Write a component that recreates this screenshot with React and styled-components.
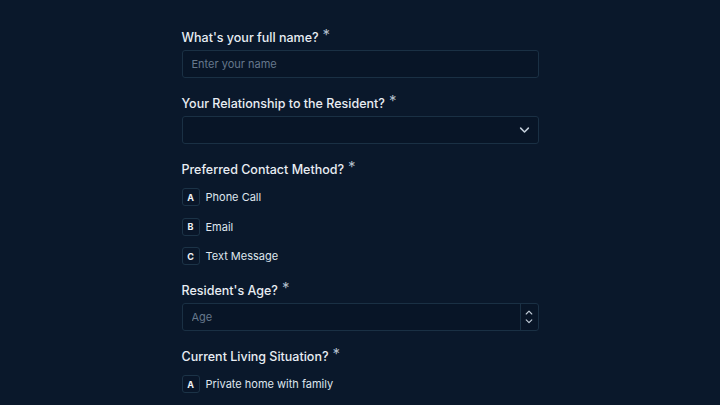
import React from 'react';
import styled, { createGlobalStyle } from 'styled-components';

const GlobalStyle = createGlobalStyle`
  html, body {
    margin: 0;
    padding: 0;
    background: #0a182b;
  }
  body {
    font-family: Inter, 'Noto Sans', sans-serif;
    color: #e6ecf2;
  }
`;

const Page = styled.main`
  width: 720px;
  height: 405px;
  overflow: hidden;
  background: #0a182b;
  display: flex;
  justify-content: center;
`;

const Form = styled.form`
  width: 357px;
  padding-top: 29px;
  display: flex;
  flex-direction: column;
  gap: 17px;
`;

const Field = styled.div`
  display: flex;
  flex-direction: column;
  gap: ${(p) => (p.$group ? '9px' : '3px')};
`;

const Label = styled.label`
  display: block;
  height: 18px;
  font-size: 12.5px;
  font-weight: 500;
  line-height: 18px;
  color: #e8edf3;
`;

const Star = styled.span`
  display: inline-block;
  margin-left: 4px;
  font-size: 15px;
  line-height: 1;
  font-weight: 400;
  color: #b0bdca;
  vertical-align: top;
  transform: translateY(-2px);
`;

const Box = styled.div`
  position: relative;
  height: 28px;
  border: 1px solid #1a3044;
  border-radius: 3px;
  background: #081527;
  box-sizing: border-box;
  display: flex;
  align-items: center;
`;

const Input = styled.input`
  flex: 1;
  height: 100%;
  min-width: 0;
  border: none;
  outline: none;
  background: transparent;
  padding: 0 9px;
  font-family: inherit;
  font-size: 11px;
  color: #e6ecf2;

  &::placeholder {
    color: #66788c;
  }
`;

const SelectIcon = styled.span`
  margin-left: auto;
  margin-right: 8px;
  display: flex;
  color: #c3ceda;
`;

const Spinner = styled.div`
  width: 17px;
  height: 100%;
  border-left: 1px solid #1a3044;
  display: flex;
  flex-direction: column;
  align-items: center;
  justify-content: center;
  gap: 4px;
  color: #c3ceda;
`;

const Options = styled.div`
  display: flex;
  flex-direction: column;
  gap: 11.5px;
`;

const Option = styled.div`
  display: flex;
  align-items: center;
  gap: 6px;
  font-size: 11px;
  color: #dfe6ee;
`;

const Badge = styled.span`
  width: 18px;
  height: 18px;
  box-sizing: border-box;
  border: 1px solid #1c3347;
  border-radius: 3px;
  background: #091629;
  display: flex;
  align-items: center;
  justify-content: center;
  font-size: 9px;
  font-weight: 700;
  color: #eef2f6;
`;

const Chevron = ({ up, size = 10 }) => (
  <svg width={size} height={size * 0.6} viewBox="0 0 10 6" fill="none">
    <path
      d={up ? 'M1.5 5L5 1.5L8.5 5' : 'M1.5 1L5 4.5L8.5 1'}
      stroke="currentColor"
      strokeWidth="1.4"
      strokeLinecap="round"
      strokeLinejoin="round"
    />
  </svg>
);

const RequiredLabel = ({ children }) => (
  <Label>
    {children}
    <Star>*</Star>
  </Label>
);

const Choices = ({ items }) => (
  <Options>
    {items.map((text, i) => (
      <Option key={text}>
        <Badge>{String.fromCharCode(65 + i)}</Badge>
        {text}
      </Option>
    ))}
  </Options>
);

const App = () => (
  <>
    <GlobalStyle />
    <Page>
      <Form onSubmit={(e) => e.preventDefault()}>
        <Field>
          <RequiredLabel>What's your full name?</RequiredLabel>
          <Box>
            <Input type="text" placeholder="Enter your name" />
          </Box>
        </Field>

        <Field>
          <RequiredLabel>Your Relationship to the Resident?</RequiredLabel>
          <Box>
            <SelectIcon>
              <Chevron size={11} />
            </SelectIcon>
          </Box>
        </Field>

        <Field $group>
          <RequiredLabel>Preferred Contact Method?</RequiredLabel>
          <Choices items={['Phone Call', 'Email', 'Text Message']} />
        </Field>

        <Field>
          <RequiredLabel>Resident's Age?</RequiredLabel>
          <Box>
            <Input type="text" placeholder="Age" />
            <Spinner>
              <Chevron up size={8} />
              <Chevron size={8} />
            </Spinner>
          </Box>
        </Field>

        <Field $group>
          <RequiredLabel>Current Living Situation?</RequiredLabel>
          <Choices items={['Private home with family']} />
        </Field>
      </Form>
    </Page>
  </>
);

export default App;
